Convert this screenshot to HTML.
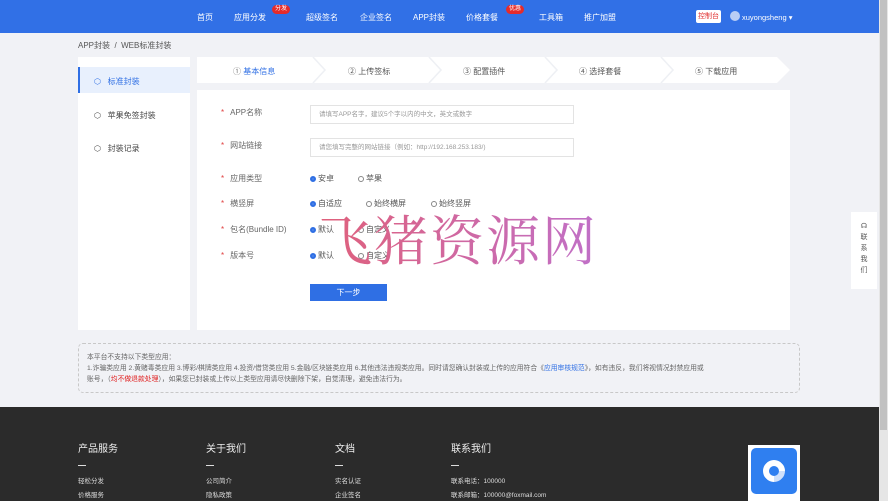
<!DOCTYPE html>
<html><head><meta charset="utf-8"><style>
*{margin:0;padding:0;box-sizing:border-box}
body{width:888px;height:501px;overflow:hidden;background:#f1f2f6;font-family:"Liberation Sans","Noto Sans CJK SC",sans-serif;font-size:8px;color:#555;position:relative}
.nav{position:absolute;left:0;top:0;width:879px;height:33px;background:#3170e6;color:#fff;font-size:8px}
.nav span{position:absolute;top:12px}
.badge{position:absolute;background:#e52b2b;color:#fff;font-size:6px;border-radius:6px;padding:0 3px;line-height:9px}
.a{position:absolute}
.sb{position:absolute;left:879px;top:0;width:9px;height:501px;background:#e6e6e6}
.sb div{position:absolute;left:1px;top:0;width:7px;height:430px;background:#c1c1c1}
.side{left:78px;top:57px;width:112px;height:273px;background:#fff}
.si{position:absolute;left:16px;font-size:8px;color:#444}
.steps{left:197px;top:57px;width:593px;height:26px;background:#fff}
.st{position:absolute;top:9px;font-size:8px;color:#555}
.panel{left:197px;top:90px;width:593px;height:240px;background:#fff}
.lab{position:absolute;left:24px;font-size:8px;color:#666}
.lab b{color:#e04040;font-weight:normal;margin-right:6px}
.inp{position:absolute;left:113px;width:264px;height:19px;border:1px solid #e3e3e3;font-size:6.5px;color:#999;padding:0 0 0 8px;line-height:17px}
.r{position:absolute;font-size:8px;color:#555}
.r i{display:inline-block;width:6px;height:6px;border-radius:50%;border:1px solid #888;margin-right:2px;vertical-align:-1px}
.r i.on{border:2px solid #2f6fe4;background:#fff;box-shadow:inset 0 0 0 1px #2f6fe4}
.foot{left:0;top:407px;width:879px;height:94px;background:#2b2b2b;color:#fff}
.fh{position:absolute;top:33px;font-size:10px;color:#eee}
.fd{position:absolute;top:58px;width:8px;height:1px;background:#ddd}
.fl{position:absolute;font-size:6.5px;color:#ddd}
</style></head><body>
<div class="nav">
<span style="left:197px">首页</span>
<span style="left:234px">应用分发</span><div class="badge" style="left:272px;top:5px">分发</div>
<span style="left:306px">超级签名</span>
<span style="left:360px">企业签名</span>
<span style="left:413px">APP封装</span>
<span style="left:466px">价格套餐</span><div class="badge" style="left:506px;top:5px">优惠</div>
<span style="left:539px">工具箱</span>
<span style="left:584px">推广加盟</span>
<div class="a" style="left:696px;top:10px;width:25px;height:13px;background:#fff;color:#e03030;font-size:7px;text-align:center;line-height:13px;border-radius:2px">控制台</div>
<div class="a" style="left:730px;top:11px;width:10px;height:10px;border-radius:50%;background:#b9cdf5"></div>
<span style="left:742px;top:13px;font-size:7.5px">xuyongsheng ▾</span>
</div>
<div class="a" style="left:78px;top:40px;font-size:8px;color:#555">APP封装 &nbsp;/&nbsp; WEB标准封装</div>
<div class="a side">
<div class="a" style="left:0;top:10px;width:112px;height:26px;background:#e8f0fd;border-left:2px solid #2f6fe4"></div>
<div class="si" style="top:19px;color:#2f6fe4">⬡&nbsp;&nbsp; 标准封装</div>
<div class="si" style="top:53px">⬡&nbsp;&nbsp; 苹果免签封装</div>
<div class="si" style="top:86px">⬡&nbsp;&nbsp; 封装记录</div>
</div>
<div class="a steps">
<svg class="a" style="left:0;top:0" width="593" height="26"><g fill="none" stroke="#eef0f4" stroke-width="1.5"><path d="M116 0 L128 13 L116 26"/><path d="M232 0 L244 13 L232 26"/><path d="M348 0 L360 13 L348 26"/><path d="M464 0 L476 13 L464 26"/></g><path d="M580 0 L593 13 L580 26 L593 26 L593 0Z" fill="#f1f2f6"/></svg>
<span class="st" style="left:36px;color:#2f6fe4"><span style="color:#777">①</span> 基本信息</span>
<span class="st" style="left:151px">② 上传签标</span>
<span class="st" style="left:266px">③ 配置插件</span>
<span class="st" style="left:382px">④ 选择套餐</span>
<span class="st" style="left:498px">⑤ 下载应用</span>
</div>
<div class="a panel">
<div class="lab" style="top:17px"><b>*</b>APP名称</div><div class="inp" style="top:15px">请填写APP名字，建议5个字以内的中文，英文或数字</div>
<div class="lab" style="top:50px"><b>*</b>网站链接</div><div class="inp" style="top:48px">请您填写完整的网站链接（例如：http://192.168.253.183/)</div>
<div class="lab" style="top:83px"><b>*</b>应用类型</div>
<div class="r" style="left:113px;top:83px"><i class="on"></i>安卓</div><div class="r" style="left:161px;top:83px"><i></i>苹果</div>
<div class="lab" style="top:108px"><b>*</b>横竖屏</div>
<div class="r" style="left:113px;top:108px"><i class="on"></i>自适应</div><div class="r" style="left:169px;top:108px"><i></i>始终横屏</div><div class="r" style="left:234px;top:108px"><i></i>始终竖屏</div>
<div class="lab" style="top:134px"><b>*</b>包名(Bundle ID)</div>
<div class="r" style="left:113px;top:134px"><i class="on"></i>默认</div><div class="r" style="left:161px;top:134px"><i></i>自定义</div>
<div class="lab" style="top:160px"><b>*</b>版本号</div>
<div class="r" style="left:113px;top:160px"><i class="on"></i>默认</div><div class="r" style="left:161px;top:160px"><i></i>自定义</div>
<div class="a" style="left:113px;top:194px;width:77px;height:17px;background:#2f6fe4;color:#fff;text-align:center;line-height:17px;font-size:8px">下一步</div>
</div>
<div class="a" style="left:318px;top:205px;font-family:'Noto Serif CJK SC',serif;font-size:54px;line-height:66px;letter-spacing:2px;background:linear-gradient(90deg,#e0607a,#c070c8);-webkit-background-clip:text;color:transparent">飞猪资源网</div>
<div class="a" style="left:851px;top:212px;width:26px;height:77px;background:#fff;color:#555;font-size:7px;text-align:center;padding-top:9px;line-height:11px">☊<br>联<br>系<br>我<br>们</div>
<div class="a" style="left:78px;top:343px;width:722px;height:50px;border:1px dashed #c8c8c8;border-radius:5px;font-size:6.8px;color:#666;padding:8px 8px;line-height:11px">本平台不支持以下类型应用：<br>1.诈骗类应用 2.黄赌毒类应用 3.博彩/棋牌类应用 4.投资/借贷类应用 5.金融/区块链类应用 6.其他违法违规类应用。同时请您确认封装或上传的应用符合《<span style="color:#2f6fe4">应用审核规范</span>》，如有违反，我们将视情况封禁应用或<br>账号，（<span style="color:#e02020">均不做退款处理</span>），如果您已封装或上传以上类型应用请尽快删除下架，自觉清理，避免违法行为。</div>
<div class="a foot">
<div class="fh" style="left:78px">产品服务</div><div class="fh" style="left:206px">关于我们</div><div class="fh" style="left:335px">文档</div><div class="fh" style="left:451px">联系我们</div>
<div class="fd" style="left:78px"></div><div class="fd" style="left:206px"></div><div class="fd" style="left:335px"></div><div class="fd" style="left:451px"></div>
<div class="fl" style="left:78px;top:68px">轻松分发</div><div class="fl" style="left:78px;top:82px">价格服务</div>
<div class="fl" style="left:206px;top:68px">公司简介</div><div class="fl" style="left:206px;top:82px">隐私政策</div>
<div class="fl" style="left:335px;top:68px">实名认证</div><div class="fl" style="left:335px;top:82px">企业签名</div>
<div class="fl" style="left:451px;top:68px">联系电话：100000</div><div class="fl" style="left:451px;top:82px">联系邮箱：100000@foxmail.com</div>
<div class="a" style="left:748px;top:38px;width:52px;height:56px;background:#fff;padding:3px"><div style="width:46px;height:46px;background:#2f7ff0;border-radius:5px;position:relative"><div style="position:absolute;left:12px;top:12px;width:22px;height:22px;border-radius:50%;border:6px solid #fff;transform:rotate(45deg);border-right-color:#cfe0fb"></div></div></div>
</div>
<div class="sb"><div></div></div>
</body></html>
